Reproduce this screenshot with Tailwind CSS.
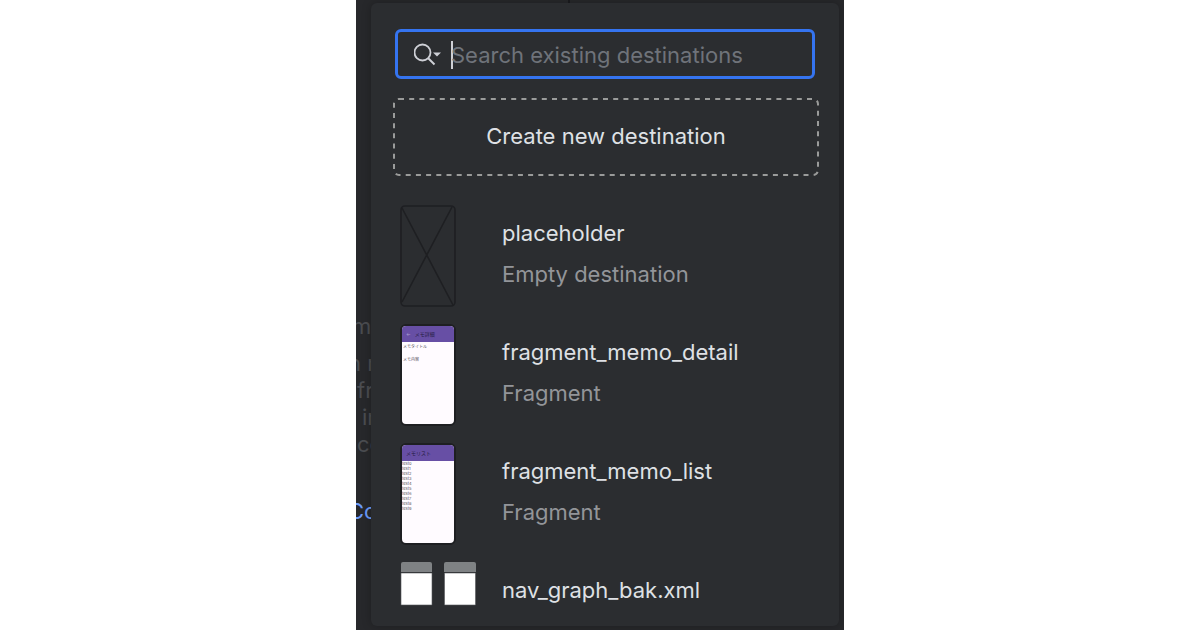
<!DOCTYPE html>
<html lang="en">
<head>
<meta charset="utf-8">
<meta name="viewport" content="width=device-width,initial-scale=1">
<title>New destination</title>
<script src="https://cdn.jsdelivr.net/npm/@tailwindcss/browser@4"></script>
</head>
<body class="min-h-screen flex justify-center bg-white font-[Inter,'Noto_Sans_CJK_JP',sans-serif] text-[22px] antialiased">

<div class="relative w-full max-w-[488px] min-h-screen overflow-hidden bg-[#27282b]">

  <!-- Editor behind the popup -->
  <div class="flex h-1 justify-center pr-[62px]"><span class="w-[2px] bg-[#1a1b1e]"></span></div>
  <div class="pt-[309px] whitespace-nowrap leading-[27px] text-[#4b4d51]" aria-hidden="true">
    <p class="-ml-1 mb-[10px]">m</p>
    <p class="-ml-2">n m</p>
    <p class="ml-px">fr</p>
    <p class="ml-1.5">in</p>
    <p class="ml-px">co</p>
    <a href="#" class="mt-10 -ml-2 block text-[#6b9bfa]">Co</a>
  </div>

  <!-- Popup -->
  <main class="absolute top-[3px] left-[15px] right-[5px] rounded-md bg-[#2b2d30] pl-[22px] pr-5 pt-[26px] pb-5 shadow-[0_0_10px_rgba(0,0,0,0.25)]">
    <label class="ml-0.5 mr-1 flex h-[50px] items-center rounded-md border-[3px] border-[#3574f0] pt-0.5 pl-4">
      <span class="sr-only">Search existing destinations</span>
      <svg class="shrink-0" width="29" height="24" viewBox="0 0 29 24" fill="none">
        <circle cx="8.5" cy="9.5" r="8" stroke="#ced0d6" stroke-width="1.8"/>
        <path d="M14 15l6.500 6.500" stroke="#ced0d6" stroke-width="2"/>
        <path d="M19 9.500h8l-4 4z" fill="#ced0d6"/>
      </svg>
      <span class="ml-2 h-7 w-[2px] shrink-0 bg-[#ced0d6]"></span>
      <input type="text" placeholder="Search existing destinations"
             class="-ml-0.5 w-full min-w-0 bg-transparent text-[#dfe1e5] placeholder-[#6f737a] outline-none">
    </label>

    <button type="button" class="relative mt-[19px] flex h-[78px] w-full items-center justify-center pb-0.5 text-[#dfe1e5]">
      <svg class="absolute inset-0 h-full w-full overflow-visible p-px" fill="none">
        <rect width="100%" height="100%" rx="5" stroke="#9a9b9a" stroke-width="2" stroke-dasharray="5 5.200"/>
      </svg>
      Create new destination
    </button>

    <ul class="mt-[29px] ml-[7px] flex flex-col gap-[17px] leading-[41px]">
      <li class="flex h-[102px] gap-[46px]">
        <svg class="shrink-0" width="56" height="102" viewBox="0 0 56 102" fill="none" stroke="#1e1f22" stroke-width="1.6">
          <rect x="1" y="1" width="54" height="100" rx="4"/>
          <path d="M2 3l51 97M52 2L2 97"/>
        </svg>
        <div class="pt-2">
          <p class="text-[#dfe1e5]">placeholder</p>
          <p class="text-[#939599]">Empty destination</p>
        </div>
      </li>

      <li class="flex h-[102px] gap-[46px]">
        <div class="w-14 shrink-0 overflow-hidden rounded-md border-2 border-[#1e1f22] bg-[#fffbff] text-[5px] leading-[5px] text-[#55505a]">
          <div class="flex h-4 items-center gap-1 bg-[#674fa5] pl-1 text-[#251b40]"><span class="text-[#a99bd0]">←</span><span>メモ詳細</span></div>
          <p class="mt-0.5 pl-px text-[4px]">メモタイトル</p>
          <p class="mt-2 pl-px text-[4px]">メモ内容</p>
        </div>
        <div class="pt-2">
          <p class="text-[#dfe1e5]">fragment_memo_detail</p>
          <p class="text-[#939599]">Fragment</p>
        </div>
      </li>

      <li class="flex h-[102px] gap-[46px]">
        <div class="w-14 shrink-0 overflow-hidden rounded-md border-2 border-[#1e1f22] bg-[#fffbff] text-[4px] leading-[5px] text-[#55505a]">
          <div class="flex h-4 items-center bg-[#674fa5] pl-1 text-[5px] text-[#251b40]">メモリスト</div>
          <p>test0</p>
          <p>test1</p>
          <p>test2</p>
          <p>test3</p>
          <p>test4</p>
          <p>test5</p>
          <p>test6</p>
          <p>test7</p>
          <p>test8</p>
          <p>test9</p>
        </div>
        <div class="pt-2">
          <p class="text-[#dfe1e5]">fragment_memo_list</p>
          <p class="text-[#939599]">Fragment</p>
        </div>
      </li>

      <li class="flex h-11 gap-[26px]">
        <svg class="shrink-0" width="76" height="44" viewBox="0 0 76 44">
          <path d="M1 10V2q0-2 2-2h27q2 0 2 2v8zM44 10V2q0-2 2-2h28q2 0 2 2v8z" fill="#7f8284"/>
          <path d="M1 11h31v32H1zM44.500 11h31v32h-31z" fill="#fff" stroke="#55575a" stroke-width="0.6"/>
        </svg>
        <p class="pt-2 text-[#dfe1e5]">nav_graph_bak.xml</p>
      </li>
    </ul>
  </main>
</div>

</body>
</html>
